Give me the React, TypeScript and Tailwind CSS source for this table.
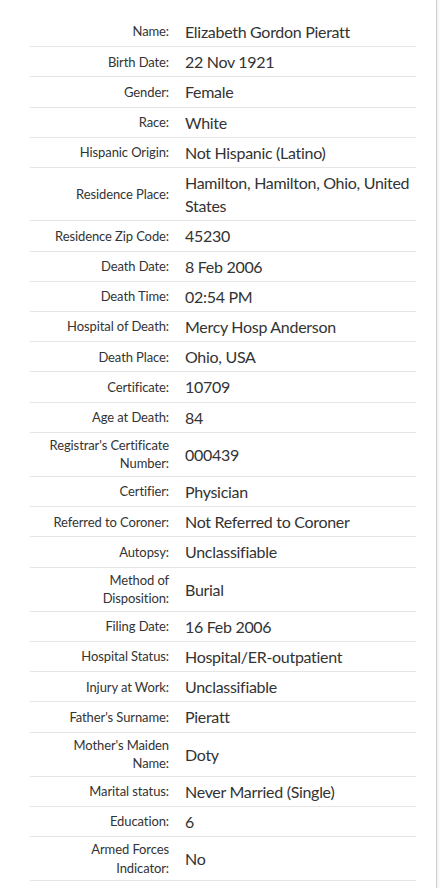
import React from "react";

type Row = { label: React.ReactNode; value: React.ReactNode };

const rows: Row[] = [
  { label: "Name:", value: "Elizabeth Gordon Pieratt" },
  { label: "Birth Date:", value: "22 Nov 1921" },
  { label: "Gender:", value: "Female" },
  { label: "Race:", value: "White" },
  { label: "Hispanic Origin:", value: "Not Hispanic (Latino)" },
  {
    label: "Residence Place:",
    value: (
      <>
        Hamilton, Hamilton, Ohio, United
        <br />
        States
      </>
    ),
  },
  { label: "Residence Zip Code:", value: "45230" },
  { label: "Death Date:", value: "8 Feb 2006" },
  { label: "Death Time:", value: "02:54 PM" },
  { label: "Hospital of Death:", value: "Mercy Hosp Anderson" },
  { label: "Death Place:", value: "Ohio, USA" },
  { label: "Certificate:", value: "10709" },
  { label: "Age at Death:", value: "84" },
  {
    label: (
      <>
        Registrar's Certificate
        <br />
        Number:
      </>
    ),
    value: "000439",
  },
  { label: "Certifier:", value: "Physician" },
  { label: "Referred to Coroner:", value: "Not Referred to Coroner" },
  { label: "Autopsy:", value: "Unclassifiable" },
  {
    label: (
      <>
        Method of
        <br />
        Disposition:
      </>
    ),
    value: "Burial",
  },
  { label: "Filing Date:", value: "16 Feb 2006" },
  { label: "Hospital Status:", value: "Hospital/ER-outpatient" },
  { label: "Injury at Work:", value: "Unclassifiable" },
  { label: "Father's Surname:", value: "Pieratt" },
  {
    label: (
      <>
        Mother's Maiden
        <br />
        Name:
      </>
    ),
    value: "Doty",
  },
  { label: "Marital status:", value: "Never Married (Single)" },
  { label: "Education:", value: "6" },
  {
    label: (
      <>
        Armed Forces
        <br />
        Indicator:
      </>
    ),
    value: "No",
  },
];

export default function App() {
  return (
    <div
      className="h-[888px] w-[441px] overflow-hidden bg-white text-[#333]"
      style={{ fontFamily: "Lato, 'Noto Sans', sans-serif" }}
    >
      <div className="h-full w-[437px] border-r border-[#cfcfcf] pt-[17px] pl-[30px] pr-[20px] shadow-[1px_0_3px_rgba(0,0,0,0.08)]">
        {rows.map((row, i) => (
          <div key={i} className="flex items-center border-b border-[#e5e5e5] py-[3px]">
            <div className="w-[147px] shrink-0 pr-2 text-right text-[13px] leading-[18.6px] tracking-[-0.1px] text-[#333]">
              {row.label}
            </div>
            <div className="min-w-0 flex-1 whitespace-nowrap pl-2 text-[16px] leading-[23.2px] tracking-[-0.3px] text-[#333]">
              {row.value}
            </div>
          </div>
        ))}
      </div>
    </div>
  );
}
